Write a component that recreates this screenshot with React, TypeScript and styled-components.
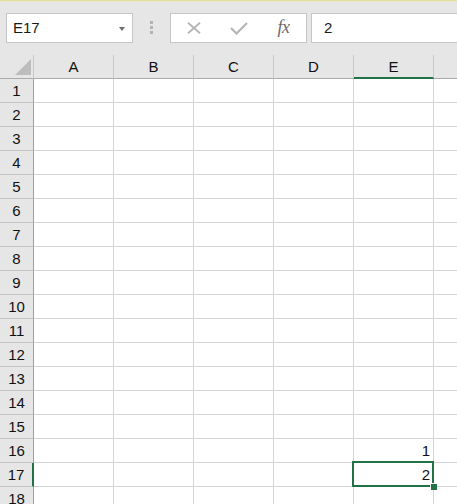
import React from "react";
import styled, { createGlobalStyle } from "styled-components";

const GlobalStyle = createGlobalStyle`
  html, body {
    margin: 0;
    padding: 0;
    background: #e6e6e6;
    overflow: hidden;
  }
  body {
    font-family: "Liberation Sans", Arial, sans-serif;
    color: #000;
  }
  * { box-sizing: border-box; }
`;

const Window = styled.div`
  width: 457px;
  height: 504px;
  overflow: hidden;
  background: #e6e6e6;
  display: flex;
  flex-direction: column;
`;

const TopStripe = styled.div`
  height: 2px;
  flex: none;
  background: linear-gradient(#e2dea2 0 1px, #ebe9cc 1px 2px);
`;

const Toolbar = styled.div`
  height: 53px;
  flex: none;
  display: flex;
  align-items: flex-start;
  padding: 11px 0 0 6px;
`;

const Box = styled.div`
  height: 30px;
  background: #fff;
  border: 1px solid #c6c6c6;
  flex: none;
`;

const NameBox = styled(Box)`
  width: 127px;
  display: flex;
  align-items: center;
  justify-content: space-between;
  padding: 0 7px 0 6px;
`;

const NameText = styled.span`
  font-size: 15px;
  line-height: 28px;
  color: #1a1a1a;
`;

const DropArrow = styled.span`
  width: 0;
  height: 0;
  border-left: 3.5px solid transparent;
  border-right: 3.5px solid transparent;
  border-top: 4px solid #6e6e6e;
  margin-top: 1px;
`;

const Grip = styled.div`
  margin: 8px 17px 0 17px;
  display: flex;
  flex-direction: column;
  gap: 2px;
`;

const GripDot = styled.span`
  width: 3px;
  height: 3px;
  background: #b3b3b3;
`;

const FxButtons = styled(Box)`
  width: 137px;
  display: flex;
`;

const IconSlot = styled.div`
  width: 45px;
  height: 28px;
  display: flex;
  align-items: center;
  justify-content: center;
`;

const FxText = styled.span`
  font-family: "Liberation Serif", "Times New Roman", serif;
  font-style: italic;
  font-size: 18px;
  color: #6a6a6a;
  letter-spacing: -0.5px;
  margin-top: -1px;
`;

const FormulaInput = styled(Box)`
  flex: 1;
  margin-left: 4px;
  margin-right: -4px;
  padding-left: 12px;
  font-size: 15px;
  line-height: 28px;
  color: #1a1a1a;
`;

const Sheet = styled.div`
  display: grid;
  grid-template-columns: 34px repeat(6, 80px);
  grid-auto-rows: 24px;
  background: #fff;
  flex: none;
`;

const Corner = styled.div`
  background: #e6e6e6;
  border-right: 1px solid #c8c8c8;
  border-bottom: 1px solid #ababab;
  display: flex;
  align-items: flex-end;
  justify-content: flex-end;
  padding: 0 2px 3px 0;
`;

const ColHeader = styled.div<{ $active?: boolean }>`
  background: #e6e6e6;
  border-right: 1px solid #c8c8c8;
  border-bottom: ${(p) => (p.$active ? "2px solid #217346" : "1px solid #ababab")};
  text-align: center;
  font-size: 15px;
  line-height: 22px;
  padding-top: 1px;
  color: #111;
`;

const RowHeader = styled.div<{ $active?: boolean }>`
  background: #e6e6e6;
  border-right: ${(p) => (p.$active ? "2px solid #217346" : "1px solid #9e9e9e")};
  border-bottom: 1px solid #c4c4c4;
  text-align: center;
  font-size: 15px;
  line-height: 22px;
  padding-top: 1px;
  color: #111;
`;

const Cell = styled.div`
  position: relative;
  border-right: 1px solid #d4d4d4;
  border-bottom: 1px solid #d4d4d4;
  text-align: right;
  padding: 1px 3px 0 0;
  font-size: 15px;
  line-height: 22px;
  color: #111;
`;

const Selection = styled.div`
  position: absolute;
  top: -2px;
  left: -2px;
  right: -1px;
  bottom: -1px;
  border: 2px solid #217346;
  z-index: 1;
  pointer-events: none;
`;

const FillHandle = styled.span`
  position: absolute;
  right: -5px;
  bottom: -5px;
  width: 6px;
  height: 6px;
  background: #217346;
  box-shadow: -1px -1px 0 0 #fff;
`;

const columns = ["A", "B", "C", "D", "E", "F"];
const rows = Array.from({ length: 18 }, (_, i) => i + 1);
const values: Record<number, Record<string, string>> = {
  16: { E: "1" },
  17: { E: "2" },
};
const activeCol = "E";
const activeRow = 17;

const CloseIcon = () => (
  <svg width="16" height="12" viewBox="0 0 16 12">
    <path d="M2 0.8 L14 11.2 M14 0.8 L2 11.2" stroke="#b5b5b5" strokeWidth="1.8" fill="none" />
  </svg>
);

const CheckIcon = () => (
  <svg width="18" height="13" viewBox="0 0 18 13">
    <path d="M1 6 L6.5 11.5 L17 1" stroke="#b5b5b5" strokeWidth="2.2" fill="none" />
  </svg>
);

const CornerTriangle = () => (
  <svg width="16" height="16" viewBox="0 0 16 16">
    <polygon points="16,0 16,16 0,16" fill="#bdbdbd" />
  </svg>
);

export default function App() {
  return (
    <>
      <GlobalStyle />
      <Window>
        <TopStripe />
        <Toolbar>
          <NameBox>
            <NameText>E17</NameText>
            <DropArrow />
          </NameBox>
          <Grip>
            <GripDot />
            <GripDot />
            <GripDot />
          </Grip>
          <FxButtons>
            <IconSlot>
              <CloseIcon />
            </IconSlot>
            <IconSlot>
              <CheckIcon />
            </IconSlot>
            <IconSlot>
              <FxText>fx</FxText>
            </IconSlot>
          </FxButtons>
          <FormulaInput>2</FormulaInput>
        </Toolbar>
        <Sheet>
          <Corner>
            <CornerTriangle />
          </Corner>
          {columns.map((c) => (
            <ColHeader key={c} $active={c === activeCol}>
              {c === "F" ? "" : c}
            </ColHeader>
          ))}
          {rows.map((r) => (
            <React.Fragment key={r}>
              <RowHeader $active={r === activeRow}>{r}</RowHeader>
              {columns.map((c) => (
                <Cell key={c}>
                  {values[r]?.[c] ?? ""}
                  {r === activeRow && c === activeCol && (
                    <Selection>
                      <FillHandle />
                    </Selection>
                  )}
                </Cell>
              ))}
            </React.Fragment>
          ))}
        </Sheet>
      </Window>
    </>
  );
}
